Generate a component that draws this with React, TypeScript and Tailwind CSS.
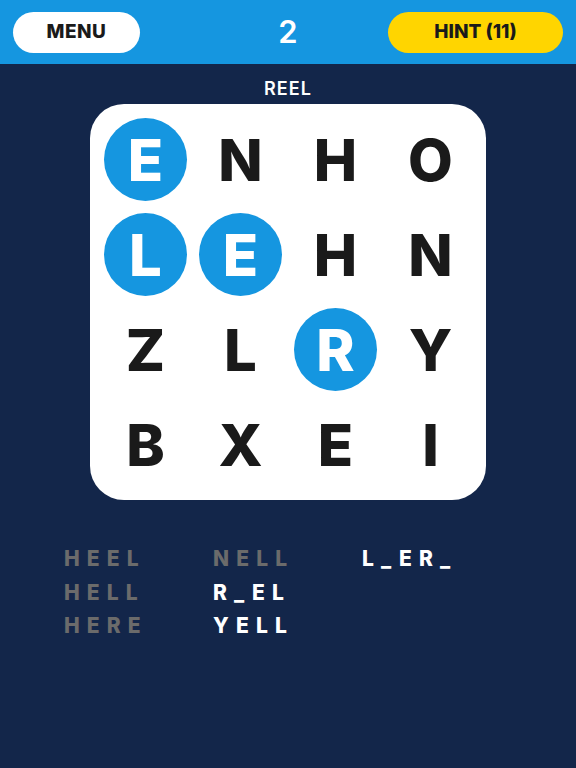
import React from 'react';

const grid: string[][] = [
  ['E', 'N', 'H', 'O'],
  ['L', 'E', 'H', 'N'],
  ['Z', 'L', 'R', 'Y'],
  ['B', 'X', 'E', 'I'],
];

// cells picked for the current word
const picked = new Set(['0-0', '1-0', '1-1', '2-2']);

const columns: { text: string; found: boolean }[][] = [
  [
    { text: 'HEEL', found: true },
    { text: 'HELL', found: true },
    { text: 'HERE', found: true },
  ],
  [
    { text: 'NELL', found: true },
    { text: 'R_EL', found: false },
    { text: 'YELL', found: false },
  ],
  [{ text: 'L_ER_', found: false }],
];

export default function App() {
  return (
    <div
      className="w-[576px] h-[768px] bg-[#13264a] flex flex-col overflow-hidden"
      style={{ fontFamily: 'Inter, "Noto Sans", sans-serif' }}
    >
      <header className="h-[64px] bg-[#1596e0] flex items-center px-[13px]">
        <div className="flex-1 flex">
          <button className="w-[127px] h-[41px] rounded-full bg-white text-[#1a1a1a] text-[19px] font-extrabold tracking-wide">
            MENU
          </button>
        </div>
        <span className="text-white text-[31px] font-semibold">2</span>
        <div className="flex-1 flex justify-end">
          <button className="w-[175px] h-[41px] rounded-full bg-[#ffd500] text-[#1a1a1a] text-[19px] font-extrabold">
            HINT (11)
          </button>
        </div>
      </header>

      <div className="flex flex-col items-center">
        <div className="mt-[15px] h-[20px] text-white text-[18px] font-semibold tracking-[0.06em] leading-[20px]">
          REEL
        </div>
        <div className="mt-[5px] w-[396px] h-[396px] bg-white rounded-[34px] p-[14px] grid grid-cols-4 gap-[12px]">
          {grid.map((row, r) =>
            row.map((ch, c) => {
              const on = picked.has(`${r}-${c}`);
              return (
                <div
                  key={`${r}-${c}`}
                  className={
                    on
                      ? 'w-[83px] h-[83px] rounded-full bg-[#1596e0] text-white flex items-center justify-center text-[58px] font-extrabold leading-none'
                      : 'w-[83px] h-[83px] text-[#1a1a1a] flex items-center justify-center text-[58px] font-extrabold leading-none'
                  }
                >
                  {ch}
                </div>
              );
            })
          )}
        </div>
      </div>

      <div className="mt-[42px] pl-[64px] flex">
        {columns.map((col, i) => (
          <div key={i} className="w-[149px] flex flex-col">
            {col.map((w) => (
              <div
                key={w.text}
                className={
                  w.found
                    ? 'h-[33.5px] text-[#6b6b6b] text-[21px] font-extrabold tracking-[0.34em] leading-[33px]'
                    : 'h-[33.5px] text-white text-[21px] font-extrabold tracking-[0.34em] leading-[33px]'
                }
              >
                {w.text}
              </div>
            ))}
          </div>
        ))}
      </div>
    </div>
  );
}
